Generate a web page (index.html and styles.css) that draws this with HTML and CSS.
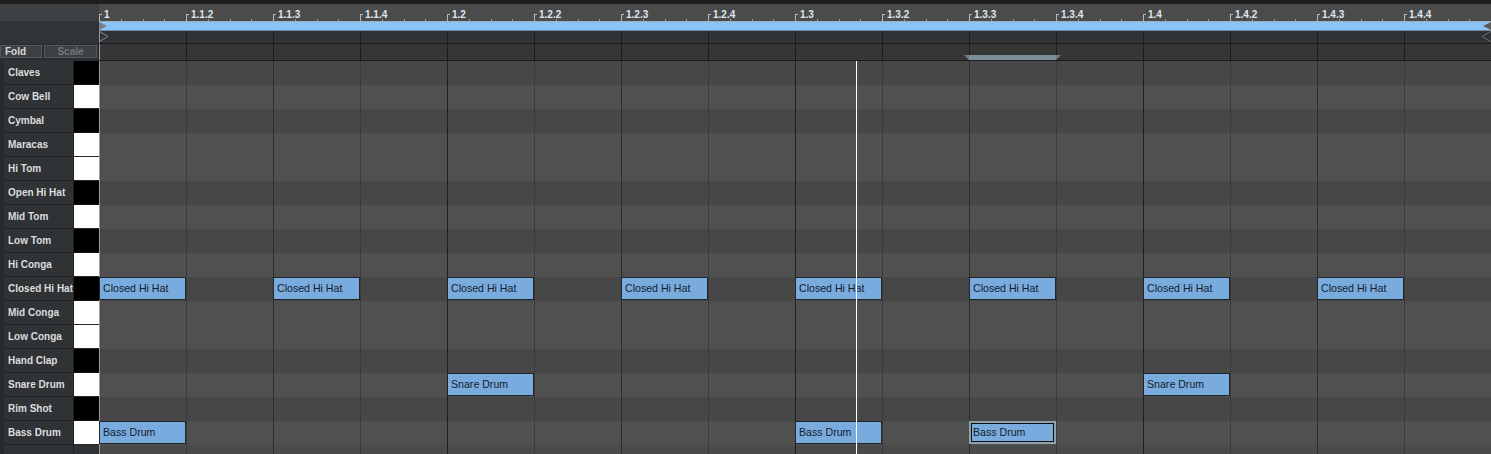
FILE: index.html
```html
<!DOCTYPE html>
<html>
<head>
<meta charset="utf-8">
<link rel="stylesheet" href="styles.css">
</head>
<body>
<div class="topstrip"></div>
<div class="main">
  <aside class="side">
    <div class="side-ruler"></div>
    <div class="side-loop"></div>
    <div class="side-btns">
      <button class="btn fold">Fold</button>
      <button class="btn scale">Scale</button>
    </div>
    <div class="keys">
      <div class="krow"><div class="edge"></div><div class="label">Claves</div><div class="key b"></div></div>
      <div class="krow"><div class="edge"></div><div class="label">Cow Bell</div><div class="key w"></div></div>
      <div class="krow"><div class="edge"></div><div class="label">Cymbal</div><div class="key b"></div></div>
      <div class="krow"><div class="edge"></div><div class="label">Maracas</div><div class="key w"></div></div>
      <div class="krow"><div class="edge"></div><div class="label">Hi Tom</div><div class="key w"></div></div>
      <div class="krow"><div class="edge"></div><div class="label">Open Hi Hat</div><div class="key b"></div></div>
      <div class="krow"><div class="edge"></div><div class="label">Mid Tom</div><div class="key w"></div></div>
      <div class="krow"><div class="edge"></div><div class="label">Low Tom</div><div class="key b"></div></div>
      <div class="krow"><div class="edge"></div><div class="label">Hi Conga</div><div class="key w"></div></div>
      <div class="krow"><div class="edge"></div><div class="label">Closed Hi Hat</div><div class="key b"></div></div>
      <div class="krow"><div class="edge"></div><div class="label">Mid Conga</div><div class="key w"></div></div>
      <div class="krow"><div class="edge"></div><div class="label">Low Conga</div><div class="key w"></div></div>
      <div class="krow"><div class="edge"></div><div class="label">Hand Clap</div><div class="key b"></div></div>
      <div class="krow"><div class="edge"></div><div class="label">Snare Drum</div><div class="key w"></div></div>
      <div class="krow"><div class="edge"></div><div class="label">Rim Shot</div><div class="key b"></div></div>
      <div class="krow"><div class="edge"></div><div class="label">Bass Drum</div><div class="key w"></div></div>
      <div class="krow rest"><div class="edge"></div><div class="label"></div><div class="key empty"></div></div>
    </div>
  </aside>

  <section class="editor">
    <div class="ruler cols">
      <div class="rcell"><div class="rq first"><span class="brk"></span><span class="num">1</span></div><div class="rq"></div><div class="rq"></div><div class="rq"></div></div>
      <div class="rcell"><div class="rq first"><span class="brk"></span><span class="num">1.1.2</span></div><div class="rq"></div><div class="rq"></div><div class="rq"></div></div>
      <div class="rcell"><div class="rq first"><span class="brk"></span><span class="num">1.1.3</span></div><div class="rq"></div><div class="rq"></div><div class="rq"></div></div>
      <div class="rcell"><div class="rq first"><span class="brk"></span><span class="num">1.1.4</span></div><div class="rq"></div><div class="rq"></div><div class="rq"></div></div>
      <div class="rcell"><div class="rq first"><span class="brk"></span><span class="num">1.2</span></div><div class="rq"></div><div class="rq"></div><div class="rq"></div></div>
      <div class="rcell"><div class="rq first"><span class="brk"></span><span class="num">1.2.2</span></div><div class="rq"></div><div class="rq"></div><div class="rq"></div></div>
      <div class="rcell"><div class="rq first"><span class="brk"></span><span class="num">1.2.3</span></div><div class="rq"></div><div class="rq"></div><div class="rq"></div></div>
      <div class="rcell"><div class="rq first"><span class="brk"></span><span class="num">1.2.4</span></div><div class="rq"></div><div class="rq"></div><div class="rq"></div></div>
      <div class="rcell"><div class="rq first"><span class="brk"></span><span class="num">1.3</span></div><div class="rq"></div><div class="rq"></div><div class="rq"></div></div>
      <div class="rcell"><div class="rq first"><span class="brk"></span><span class="num">1.3.2</span></div><div class="rq"></div><div class="rq"></div><div class="rq"></div></div>
      <div class="rcell"><div class="rq first"><span class="brk"></span><span class="num">1.3.3</span></div><div class="rq"></div><div class="rq"></div><div class="rq"></div></div>
      <div class="rcell"><div class="rq first"><span class="brk"></span><span class="num">1.3.4</span></div><div class="rq"></div><div class="rq"></div><div class="rq"></div></div>
      <div class="rcell"><div class="rq first"><span class="brk"></span><span class="num">1.4</span></div><div class="rq"></div><div class="rq"></div><div class="rq"></div></div>
      <div class="rcell"><div class="rq first"><span class="brk"></span><span class="num">1.4.2</span></div><div class="rq"></div><div class="rq"></div><div class="rq"></div></div>
      <div class="rcell"><div class="rq first"><span class="brk"></span><span class="num">1.4.3</span></div><div class="rq"></div><div class="rq"></div><div class="rq"></div></div>
      <div class="rcell"><div class="rq first"><span class="brk"></span><span class="num">1.4.4</span></div><div class="rq"></div><div class="rq"></div><div class="rq"></div></div>
    </div>

    <div class="loop">
      <svg class="tri" width="9" height="8" viewBox="0 0 9 8"><polygon points="0,0 8,4 0,8" fill="#7e7e7e"/></svg>
      <svg class="tri" width="9" height="8" viewBox="0 0 9 8"><polygon points="9,0 1,4 9,8" fill="#5a5a5a"/></svg>
    </div>

    <div class="mark cols">
      <div class="c"></div><div class="c"></div><div class="c"></div><div class="c"></div>
      <div class="c"></div><div class="c"></div><div class="c"></div><div class="c"></div>
      <div class="c"></div><div class="c"></div><div class="c"></div><div class="c"></div>
      <div class="c"></div><div class="c"></div><div class="c"></div><div class="c"></div>
      <svg class="otri left" width="10" height="11" viewBox="0 0 10 11"><polyline points="0.5,0.5 9,5.5 0.5,10.5" fill="none" stroke="#8c8c8c" stroke-width="1"/></svg>
      <svg class="otri right" width="10" height="11" viewBox="0 0 10 11"><polyline points="9.5,0.5 1,5.5 9.5,10.5" fill="none" stroke="#6c6c6c" stroke-width="1"/></svg>
    </div>

    <div class="scaleband cols">
      <div class="c"></div><div class="c"></div><div class="c"></div><div class="c"></div>
      <div class="c"></div><div class="c"></div><div class="c"></div><div class="c"></div>
      <div class="c"></div><div class="c"></div>
      <div class="c"><svg class="range" width="97" height="5" viewBox="0 0 97 5" preserveAspectRatio="none"><polygon points="0,0 97,0 92,5 5,5" fill="#6f7f87"/><rect x="5" y="0" width="87" height="5" fill="#7c8f98"/></svg></div>
      <div class="c"></div>
      <div class="c"></div><div class="c"></div><div class="c"></div><div class="c"></div>
    </div>

    <div class="grid">
      <div class="vlines">
        <div class="vl q"></div><div class="vl"></div><div class="vl e"></div><div class="vl"></div>
        <div class="vl q"></div><div class="vl"></div><div class="vl e"></div><div class="vl"></div>
        <div class="vl q"></div><div class="vl"></div><div class="vl e"></div><div class="vl"></div>
        <div class="vl q"></div><div class="vl"></div><div class="vl e"></div><div class="vl"></div>
      </div>

      <div class="grow b"></div>
      <div class="grow w"></div>
      <div class="grow b"></div>
      <div class="grow w"></div>
      <div class="grow w"></div>
      <div class="grow b"></div>
      <div class="grow w"></div>
      <div class="grow b"></div>
      <div class="grow w"></div>
      <div class="grow b">
        <div class="note" style="grid-column:1">Closed Hi Hat</div>
        <div class="note" style="grid-column:3">Closed Hi Hat</div>
        <div class="note" style="grid-column:5">Closed Hi Hat</div>
        <div class="note" style="grid-column:7">Closed Hi Hat</div>
        <div class="note" style="grid-column:9">Closed Hi Hat</div>
        <div class="note" style="grid-column:11">Closed Hi Hat</div>
        <div class="note" style="grid-column:13">Closed Hi Hat</div>
        <div class="note" style="grid-column:15">Closed Hi Hat</div>
      </div>
      <div class="grow w"></div>
      <div class="grow w"></div>
      <div class="grow b"></div>
      <div class="grow w">
        <div class="note" style="grid-column:5">Snare Drum</div>
        <div class="note" style="grid-column:13">Snare Drum</div>
      </div>
      <div class="grow b"></div>
      <div class="grow w">
        <div class="note" style="grid-column:1">Bass Drum</div>
        <div class="note" style="grid-column:9">Bass Drum</div>
        <div class="note sel" style="grid-column:11">Bass Drum</div>
      </div>
      <div class="grow rest"></div>

      <div class="playhead"></div>
    </div>
  </section>
</div>
</body>
</html>
```

FILE: styles.css
```css
* {
  box-sizing: border-box;
  margin: 0;
  padding: 0;
}

html, body {
  width: 1491px;
  height: 454px;
  overflow: hidden;
  background: #1e1e1e;
}

body {
  font-family: "Liberation Sans", Arial, sans-serif;
  font-size: 10px;
}

.topstrip {
  height: 4px;
  background: #1e1e1e;
}

.main {
  display: flex;
  height: 450px;
}

/* ---------- left side ---------- */
.side {
  width: 99px;
  flex: none;
  display: flex;
  flex-direction: column;
  background: #2f3235;
}

.side-ruler {
  height: 17px;
  background: #3c4043;
}

.side-loop {
  height: 23px;
  background: #303337;
}

.side-btns {
  height: 17px;
  display: flex;
  gap: 2px;
  padding-top: 1px;
  background: #2b2e31;
}

.btn {
  height: 13px;
  border: 1px solid #55595c;
  background: #3c4044;
  font: bold 10px "Liberation Sans", Arial, sans-serif;
  line-height: 11px;
}

.fold {
  width: 42px;
  color: #d8d8d8;
  text-align: left;
  padding-left: 4px;
}

.scale {
  width: 53px;
  color: #74777a;
  text-align: center;
}

.keys {
  display: flex;
  flex-direction: column;
  flex: 1;
}

.krow {
  display: flex;
  height: 24px;
  flex: none;
}

.krow.rest {
  flex: 1;
  height: auto;
}

.edge {
  width: 4px;
  background: #282b2e;
}

.label {
  width: 70px;
  background: #303336;
  border-right: 1px solid #1f2123;
  border-bottom: 1px solid #1f2123;
  color: #dcdddd;
  font-weight: bold;
  padding-left: 4px;
  line-height: 23px;
  white-space: nowrap;
  overflow: hidden;
}

.rest .label {
  border-bottom: none;
}

.key {
  width: 25px;
  border-bottom: 1px solid #2a2a2a;
}

.key.w {
  background: #ffffff;
}

.key.b {
  background: #000000;
  border-bottom-color: #111111;
}

.key.empty {
  background: #2f3235;
  border-bottom: none;
}

/* ---------- editor ---------- */
.editor {
  width: 1392px;
  flex: none;
  display: flex;
  flex-direction: column;
}

.cols {
  display: grid;
  grid-template-columns: repeat(16, minmax(0, 1fr));
}

.ruler {
  height: 17px;
  background: #4b4b4b;
}

.rcell {
  display: grid;
  grid-template-columns: repeat(4, minmax(0, 1fr));
  align-items: end;
}

.rq {
  height: 2px;
  border-left: 1px solid #9a9a9a;
}

.rq.first {
  height: 17px;
  border-left: none;
  display: flex;
  align-items: flex-end;
}

.brk {
  flex: none;
  width: 3px;
  height: 7px;
  border-left: 1px solid #b8b8b8;
  border-top: 1px solid #b8b8b8;
}

.num {
  color: #dfe7ef;
  font-weight: bold;
  line-height: 10px;
  margin-left: 2px;
  padding-bottom: 1px;
  white-space: nowrap;
}

.loop {
  height: 10px;
  background: #89c3f8;
  border-top: 1px solid #a3adb6;
  border-bottom: 1px solid #74889b;
  display: flex;
  justify-content: space-between;
  align-items: center;
}

.tri {
  display: block;
}

.mark {
  height: 13px;
  background: #2f3236;
  border-bottom: 1px solid #1b1b1b;
  position: relative;
}

.scaleband {
  height: 17px;
  background: #363636;
  border-bottom: 1px solid #1b1b1b;
}

.c {
  border-left: 1px solid #1c1c1c;
}

.c:first-child {
  border-left-color: #9a9a9a;
}

.scaleband .c {
  display: flex;
  align-items: flex-end;
}

.range {
  display: block;
  flex: none;
  margin-left: -6px;
  width: calc(100% + 11px);
  height: 5px;
  position: relative;
  z-index: 1;
}

.otri {
  position: absolute;
  top: 0;
  display: block;
}

.otri.left {
  left: 0;
}

.otri.right {
  right: 0;
}

.grid {
  position: relative;
  flex: 1;
  display: flex;
  flex-direction: column;
}

.vlines {
  position: absolute;
  inset: 0;
  display: grid;
  grid-template-columns: repeat(16, minmax(0, 1fr));
  z-index: 1;
  pointer-events: none;
}

.vl {
  border-left: 1px solid #3b3b3b;
}

.vl.e {
  border-left-color: #2c2c2c;
}

.vl.q {
  border-left-color: #202020;
}

.vl:first-child {
  border-left-color: #9a9a9a;
}

.grow {
  height: 24px;
  flex: none;
  display: grid;
  grid-template-columns: repeat(16, minmax(0, 1fr));
  align-items: start;
}

.grow.b {
  background: #474747;
}

.grow.w {
  background: #505050;
}

.grow.rest {
  flex: 1;
  height: auto;
  background: #4a4a4a;
}

.note {
  grid-row: 1;
  height: 23px;
  border: 1px solid #1f252b;
  background: #79abde;
  color: #16202a;
  font-size: 10.6px;
  line-height: 21px;
  padding-left: 3px;
  white-space: nowrap;
  overflow: hidden;
  position: relative;
  z-index: 2;
}

.note.sel {
  border: 2px solid #8ea2ac;
  box-shadow: inset 0 0 0 1px #0f0f0f;
  padding-left: 2px;
  line-height: 19px;
}

.playhead {
  position: absolute;
  top: 0;
  bottom: 0;
  left: 757px;
  width: 1px;
  background: #ffffff;
  z-index: 3;
}
```
